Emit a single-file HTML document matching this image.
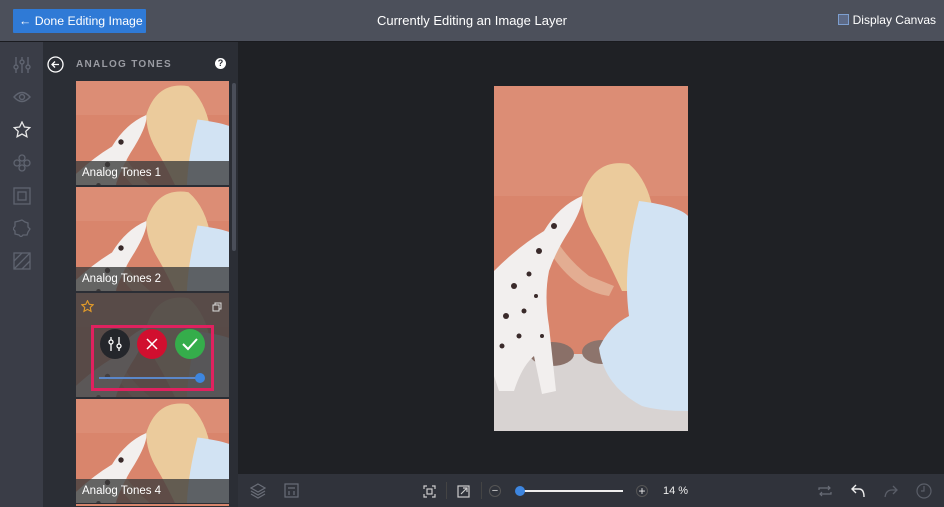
<!DOCTYPE html>
<html><head><style>
*{margin:0;padding:0;box-sizing:border-box}
html,body{width:944px;height:507px;overflow:hidden}
body{background:#1f2125;font-family:"Liberation Sans",sans-serif;position:relative}
.top{position:absolute;left:0;top:0;width:944px;height:42px;background:#4c505b;border-bottom:1px solid #1a1b1f}
.btn{position:absolute;left:13px;top:9px;width:133px;height:24px;background:#2f7ad6;color:#fff;font-size:12.3px;line-height:24px;padding-left:6px;border-radius:1px;white-space:nowrap;overflow:hidden}
.title{position:absolute;left:0;width:944px;top:13px;text-align:center;color:#fff;font-size:13px}
.dc{position:absolute;right:8px;top:13px;color:#fff;font-size:12px;white-space:nowrap}
.dc i{display:inline-block;width:11px;height:11px;border:1px solid #7d9fd0;background:#5d6a86;vertical-align:-1px;margin-right:4px}
.rail{position:absolute;left:0;top:42px;width:43px;height:465px;background:#3a3d47}
.panel{position:absolute;left:43px;top:42px;width:195px;height:465px;background:#2b2e35}
.canvas{position:absolute;left:238px;top:42px;width:706px;height:432px;background:#1f2125}
.bot{position:absolute;left:238px;top:474px;width:706px;height:33px;background:#30333b}
.tile{position:absolute;left:76px;width:153px;height:104px;overflow:hidden}
.lab{position:absolute;left:0;bottom:0;width:100%;height:24px;background:rgba(60,60,60,.78);color:#fff;font-size:11.5px;line-height:24px;padding-left:6px}
svg{display:block}
.ic{position:absolute}
</style></head><body>
<svg width="0" height="0" style="position:absolute">
<defs>
<symbol id="ph" viewBox="0 0 194 345">
<rect width="194" height="345" fill="#d9856c"/>
<rect y="0" width="194" height="110" fill="#dc8d75"/>
<rect y="268" width="194" height="77" fill="#d8d3d2"/>
<ellipse cx="58" cy="268" rx="22" ry="12" fill="#8a7068"/>
<ellipse cx="108" cy="266" rx="20" ry="12" fill="#8d746c"/>
<path d="M88 110 Q100 72 135 78 Q155 95 160 130 Q165 170 150 205 L128 205 Q112 170 100 150 Q88 130 88 110Z" fill="#ebcb9c"/>
<path d="M145 115 Q185 120 194 130 L194 325 Q165 325 148 320 Q110 300 105 262 Q115 240 135 230 Q128 180 145 115Z" fill="#d2e3f3"/>
<path d="M60 150 Q72 172 95 190 L120 200 L115 210 Q80 205 55 165Z" fill="#e3ad92"/>
<path d="M0 185 Q25 160 50 145 Q65 120 88 110 Q90 120 75 145 Q62 165 55 185 Q50 210 55 240 L62 305 L48 308 L40 270 Q28 280 20 305 L5 305 L0 290Z" fill="#f2efee"/>
<g fill="#3a2a2a"><circle cx="20" cy="200" r="3"/><circle cx="35" cy="188" r="2.5"/><circle cx="12" cy="230" r="3"/><circle cx="30" cy="225" r="2.5"/><circle cx="45" cy="165" r="3"/><circle cx="8" cy="260" r="2.5"/><circle cx="42" cy="210" r="2"/><circle cx="60" cy="140" r="3"/><circle cx="25" cy="250" r="2.5"/><circle cx="48" cy="250" r="2"/></g>
</symbol>
</defs></svg>

<div class="top">
<div class="btn">← Done Editing Image</div>
<div class="title">Currently Editing an Image Layer</div>
<div class="dc"><i></i>Display Canvas</div>
</div>

<div class="rail">
<svg class="ic" style="left:13px;top:14px" width="18" height="18" viewBox="0 0 18 18" fill="none" stroke="#5f6470" stroke-width="1.4"><path d="M3 1v16M9 1v16M15 1v16"/><circle cx="3" cy="11" r="2" fill="#3a3d47"/><circle cx="9" cy="6" r="2" fill="#3a3d47"/><circle cx="15" cy="11" r="2" fill="#3a3d47"/></svg>
<svg class="ic" style="left:13px;top:48px" width="18" height="14" viewBox="0 0 18 14" fill="none" stroke="#5f6470" stroke-width="1.4"><path d="M1 7Q9 -2 17 7Q9 16 1 7Z"/><circle cx="9" cy="7" r="2.5"/></svg>
<svg class="ic" style="left:13px;top:79px" width="18" height="18" viewBox="0 0 18 18" fill="none" stroke="#e8e8e8" stroke-width="1.3"><path d="M9 1l2.4 5 5.4.6-4 3.7 1.1 5.4L9 13l-4.9 2.7 1.1-5.4-4-3.7 5.4-.6Z"/></svg>
<svg class="ic" style="left:13px;top:112px" width="18" height="18" viewBox="0 0 18 18" fill="none" stroke="#5f6470" stroke-width="1.3"><circle cx="9" cy="4" r="3"/><circle cx="4" cy="9" r="3"/><circle cx="14" cy="9" r="3"/><circle cx="9" cy="14" r="3"/></svg>
<svg class="ic" style="left:13px;top:145px" width="18" height="18" viewBox="0 0 18 18" fill="none" stroke="#5f6470" stroke-width="1.3"><rect x="1" y="1" width="16" height="16"/><rect x="5" y="5" width="8" height="8"/></svg>
<svg class="ic" style="left:13px;top:177px" width="18" height="18" viewBox="0 0 18 18" fill="none" stroke="#5f6470" stroke-width="1.3"><path d="M9 1l3 2 3 1 0 4 2 2-2 3-1 3-4 0-2 2-2-2-4-1 0-3-2-2 2-3 0-4 4-1Z"/></svg>
<svg class="ic" style="left:13px;top:210px" width="18" height="18" viewBox="0 0 18 18" fill="none" stroke="#5f6470" stroke-width="1.3"><rect x="1" y="1" width="16" height="16"/><path d="M1 9L9 1M1 17L17 1M9 17L17 9"/></svg>
</div>

<div class="panel">
<svg class="ic" style="left:4px;top:14px" width="17" height="17" viewBox="0 0 17 17" fill="none" stroke="#fff" stroke-width="1.3"><circle cx="8.5" cy="8.5" r="7.5"/><path d="M12 8.5H5M8 5.5L5 8.5L8 11.5"/></svg>
<div style="position:absolute;left:33px;top:17px;color:#9a9ca3;font-size:10px;letter-spacing:1.3px;font-weight:bold">ANALOG TONES</div>
<div style="position:absolute;left:172px;top:16px;width:11px;height:11px;border-radius:50%;background:#fff;color:#2b2e35;font-size:9px;font-weight:bold;text-align:center;line-height:11px">?</div>
<div style="position:absolute;left:189px;top:41px;width:4px;height:168px;background:#4a4e59;border-radius:2px"></div>
</div>

<div class="tile" style="top:81px"><svg width="153" height="104" viewBox="10 72 170 116" preserveAspectRatio="xMidYMid slice"><use href="#ph" x="0" y="0" width="194" height="345"/></svg><div class="lab">Analog Tones 1</div></div>
<div class="tile" style="top:187px"><svg width="153" height="104" viewBox="10 72 170 116" preserveAspectRatio="xMidYMid slice"><use href="#ph" x="0" y="0" width="194" height="345"/></svg><div class="lab">Analog Tones 2</div></div>
<div class="tile" style="top:293px"><svg width="153" height="104" viewBox="10 72 170 116" preserveAspectRatio="xMidYMid slice"><use href="#ph" x="0" y="0" width="194" height="345"/></svg>
<div style="position:absolute;left:0;top:0;width:153px;height:104px;background:rgba(70,66,66,.88)"></div>
<svg class="ic" style="left:5px;top:7px" width="13" height="13" viewBox="0 0 18 18" fill="none" stroke="#e09a2a" stroke-width="1.6"><path d="M9 1l2.4 5 5.4.6-4 3.7 1.1 5.4L9 13l-4.9 2.7 1.1-5.4-4-3.7 5.4-.6Z"/></svg>
<svg class="ic" style="left:136px;top:8px" width="11" height="11" viewBox="0 0 11 11" fill="none" stroke="#ddd" stroke-width="1"><rect x="1" y="4" width="6" height="6"/><path d="M3 4V2h6v6H7"/></svg>
<div style="position:absolute;left:15px;top:32px;width:123px;height:66px;border:3px solid #e0215f"></div>
<div style="position:absolute;left:24px;top:36px;width:30px;height:30px;border-radius:50%;background:#24262b"></div>
<svg class="ic" style="left:31px;top:43px" width="16" height="16" viewBox="0 0 16 16" fill="none" stroke="#fff" stroke-width="1.3"><path d="M4 1v14M12 1v14"/><circle cx="4" cy="6" r="2" fill="#24262b"/><circle cx="12" cy="10" r="2" fill="#24262b"/></svg>
<div style="position:absolute;left:61px;top:36px;width:30px;height:30px;border-radius:50%;background:#d10f2f"></div>
<svg class="ic" style="left:70px;top:45px" width="12" height="12" viewBox="0 0 12 12" stroke="#fff" stroke-width="1.5"><path d="M1 1L11 11M11 1L1 11"/></svg>
<div style="position:absolute;left:99px;top:36px;width:30px;height:30px;border-radius:50%;background:#35ad4b"></div>
<svg class="ic" style="left:105px;top:44px" width="18" height="14" viewBox="0 0 18 14" fill="none" stroke="#fff" stroke-width="2"><path d="M2 7L7 12L16 2"/></svg>
<div style="position:absolute;left:23px;top:84px;width:102px;height:2px;background:#5b87c9"></div>
<div style="position:absolute;left:119px;top:80px;width:10px;height:10px;border-radius:50%;background:#3d86e0"></div>
</div>
<div class="tile" style="top:399px;height:104px"><svg width="153" height="104" viewBox="10 72 170 116" preserveAspectRatio="xMidYMid slice"><use href="#ph" x="0" y="0" width="194" height="345"/></svg><div class="lab">Analog Tones 4</div></div>
<div class="tile" style="top:504px;height:2px;background:#d9856c"></div>

<div class="canvas"></div>
<svg style="position:absolute;left:494px;top:86px" width="194" height="345" viewBox="0 0 194 345"><use href="#ph" x="0" y="0" width="194" height="345"/></svg>

<div class="bot">
<svg class="ic" style="left:12px;top:9px" width="16" height="16" viewBox="0 0 16 16" fill="none" stroke="#6a6e78" stroke-width="1.2"><path d="M8 1L15 5L8 9L1 5Z"/><path d="M1 8L8 12L15 8M1 11L8 15L15 11"/></svg>
<svg class="ic" style="left:46px;top:9px" width="15" height="15" viewBox="0 0 15 15" fill="none" stroke="#6a6e78" stroke-width="1.2"><rect x="1" y="1" width="13" height="13"/><path d="M4 5h7M5 8v4M10 8v4"/></svg>
<svg class="ic" style="left:185px;top:11px" width="13" height="13" viewBox="0 0 13 13" fill="none" stroke="#ccc" stroke-width="1.2"><path d="M1 4V1h3M9 1h3v3M12 9v3H9M4 12H1V9"/><rect x="4" y="4" width="5" height="5"/></svg>
<div style="position:absolute;left:208px;top:8px;width:1px;height:17px;background:#444"></div>
<svg class="ic" style="left:219px;top:11px" width="13" height="13" viewBox="0 0 13 13" fill="none" stroke="#ccc" stroke-width="1.2"><rect x="1" y="1" width="11" height="11"/><path d="M4 9L10 3M6 3h4v4"/></svg>
<div style="position:absolute;left:243px;top:8px;width:1px;height:17px;background:#444"></div>
<div style="position:absolute;left:251px;top:11px;width:12px;height:12px;border-radius:50%;border:1px solid #555;color:#ddd;font-size:11px;text-align:center;line-height:10px">−</div>
<div style="position:absolute;left:283px;top:16px;width:102px;height:2px;background:#eee"></div>
<div style="position:absolute;left:277px;top:12px;width:10px;height:10px;border-radius:50%;background:#3d86e0"></div>
<div style="position:absolute;left:398px;top:11px;width:12px;height:12px;border-radius:50%;border:1px solid #555;color:#eee;font-size:12px;text-align:center;line-height:11px">+</div>
<div style="position:absolute;left:425px;top:11px;color:#eee;font-size:11px">14 %</div>
<svg class="ic" style="left:580px;top:10px" width="14" height="14" viewBox="0 0 14 14" fill="none" stroke="#6a6e78" stroke-width="1.2"><path d="M1 6V4h11M10 2l2 2-2 2M13 8v2H2M4 12l-2-2 2-2"/></svg>
<svg class="ic" style="left:613px;top:10px" width="14" height="14" viewBox="0 0 14 14" fill="none" stroke="#eee" stroke-width="1.4"><path d="M5 1L1 5L5 9M1 5h7q5 0 5 8"/></svg>
<svg class="ic" style="left:646px;top:11px" width="14" height="13" viewBox="0 0 14 13" fill="none" stroke="#5a5e68" stroke-width="1.3"><path d="M9 1l4 4-4 4M13 5H8Q2 5 1 12"/></svg>
<svg class="ic" style="left:678px;top:9px" width="16" height="16" viewBox="0 0 16 16" fill="none" stroke="#5a5e68" stroke-width="1.2"><circle cx="8" cy="8" r="7"/><path d="M8 3v5H5"/></svg>
</div>
</body></html>
